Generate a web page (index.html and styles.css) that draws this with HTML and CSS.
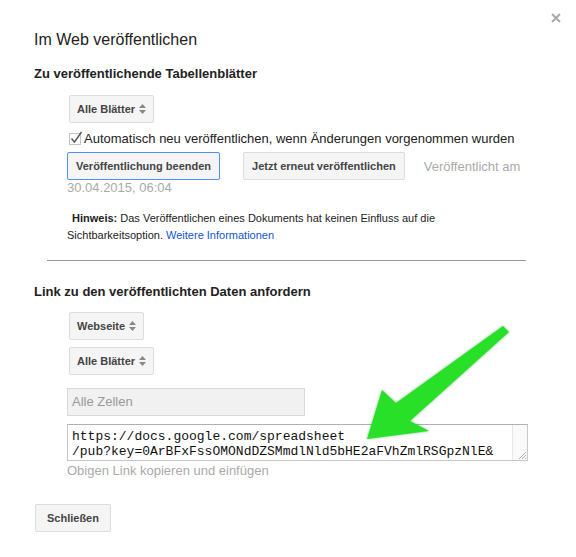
FILE: index.html
```html
<!DOCTYPE html>
<html lang="de">
<head>
  <meta charset="UTF-8" />
  <title>Im Web veröffentlichen</title>
  <link rel="stylesheet" href="styles.css">
</head>
<body>
  <div class="dialog">
    <button type="button" class="close" aria-label="Schließen">
      <svg width="12" height="12" viewBox="0 0 12 12"><path d="M2 2 L10 10 M10 2 L2 10" stroke="#aaa" stroke-width="2"/></svg>
    </button>

    <h1 class="title">Im Web veröffentlichen</h1>

    <h2 class="heading">Zu veröffentlichende Tabellenblätter</h2>
    <div class="section">
      <div class="select sheets-top">Alle Blätter
        <svg class="updown" width="7" height="10" viewBox="0 0 7 10"><path d="M0 4 L3.5 0 L7 4 Z M0 6 L3.5 10 L7 6 Z" fill="#888"/></svg>
      </div>

      <label class="check">
        <svg class="box" width="14" height="14" viewBox="0 0 14 14">
          <rect x="0.5" y="2.5" width="11" height="11" fill="#fff" stroke="#c4c4c4"/>
          <path d="M2.5 7.5 L5.5 11 L12.5 1" fill="none" stroke="#555" stroke-width="1.4"/>
        </svg>
        Automatisch neu veröffentlichen, wenn Änderungen vorgenommen wurden
      </label>

      <div class="publish-row">
        <button type="button" class="btn focused">Veröffentlichung beenden</button>
        <button type="button" class="btn">Jetzt erneut veröffentlichen</button>
        <span class="muted">Veröffentlicht am</span>
      </div>
      <div class="muted date">30.04.2015, 06:04</div>

      <p class="note"><b>Hinweis:</b> Das Veröffentlichen eines Dokuments hat keinen Einfluss auf die Sichtbarkeitsoption. <a href="#">Weitere Informationen</a></p>
    </div>

    <hr class="divider">

    <h2 class="heading link-heading">Link zu den veröffentlichten Daten anfordern</h2>
    <div class="section">
      <div class="select format">Webseite
        <svg class="updown" width="7" height="10" viewBox="0 0 7 10"><path d="M0 4 L3.5 0 L7 4 Z M0 6 L3.5 10 L7 6 Z" fill="#888"/></svg>
      </div>
      <div class="select sheets">Alle Blätter
        <svg class="updown" width="7" height="10" viewBox="0 0 7 10"><path d="M0 4 L3.5 0 L7 4 Z M0 6 L3.5 10 L7 6 Z" fill="#888"/></svg>
      </div>

      <div class="range">Alle Zellen</div>

      <div class="link-box">
        <div class="link-text">https://docs.google.com/spreadsheet
/pub?key=0ArBFxFssOMONdDZSMmdlNld5bHE2aFVhZmlRSGpzNlE&amp;</div>
        <div class="track">
          <svg class="grip" width="10" height="10" viewBox="0 0 10 10"><path d="M9 2 L2 9 M9 5 L5 9 M9 8 L8 9" stroke="#aaa" stroke-width="1"/></svg>
        </div>
      </div>
      <div class="muted hint">Obigen Link kopieren und einfügen</div>
    </div>

    <button type="button" class="btn close-btn">Schließen</button>
  </div>

  <svg class="arrow" width="576" height="557" viewBox="0 0 576 557">
    <polygon points="503,326 509,332 410,421 429,431 367,439 382,390 396,403" fill="#27e027"/>
  </svg>
</body>
</html>
```

FILE: styles.css
```css
body {
  margin: 0;
  position: relative;
  font-family: "Liberation Sans", Arial, sans-serif;
  color: #222;
  background: #fff;
}
.dialog {
  position: relative;
  padding: 30px 34px 0;
}
.close {
  position: absolute;
  top: 12px;
  right: 14px;
  padding: 0;
  border: none;
  background: none;
  line-height: 0;
}
.title {
  margin: 0;
  font-size: 16px;
  line-height: 20px;
  font-weight: normal;
}
.heading {
  margin: 16px 0 0;
  font-size: 13px;
  line-height: 16px;
  font-weight: bold;
}
.link-heading {
  margin-top: 23px;
}
.section {
  margin-left: 33px;
}
.select {
  display: flex;
  align-items: center;
  gap: 4px;
  width: max-content;
  height: 28px;
  box-sizing: border-box;
  margin-left: 2px;
  padding: 0 7px 0 7px;
  border: 1px solid #dcdcdc;
  border-radius: 2px;
  background: #f5f5f5;
  font-size: 11px;
  font-weight: bold;
  color: #444;
}
.sheets-top {
  margin-top: 13px;
}
.format {
  margin-top: 12px;
}
.sheets {
  margin-top: 7px;
}
.check {
  display: flex;
  align-items: center;
  gap: 1px;
  height: 18px;
  margin: 6px 0 0 2px;
  font-size: 13px;
}
.publish-row {
  display: flex;
  align-items: center;
  margin-top: 5px;
}
.btn {
  height: 28px;
  padding: 0 8px;
  border: 1px solid #dcdcdc;
  border-radius: 2px;
  background: #f5f5f5;
  font-family: "Liberation Sans", Arial, sans-serif;
  font-size: 11px;
  font-weight: bold;
  color: #444;
  margin-right: 23px;
}
.btn.focused {
  border-color: #4d90fe;
}
.muted {
  color: #aaa;
  font-size: 13px;
}
.publish-row .muted {
  margin-left: -4px;
}
.date {
  line-height: 16px;
}
.note {
  margin: 14px 0 0;
  width: 400px;
  font-size: 11px;
  line-height: 17px;
  text-indent: 5px;
}
.note a {
  color: #15c;
  text-decoration: none;
}
.divider {
  margin: 16px 0 0 13px;
  width: 479px;
  border: 0;
  border-top: 1px solid #999;
}
.range {
  margin-top: 13px;
  width: 238px;
  height: 28px;
  box-sizing: border-box;
  padding: 0 4px;
  border: 1px solid #d9d9d9;
  background: #f1f1f1;
  font-size: 13px;
  line-height: 26px;
  color: #999;
}
.link-box {
  display: flex;
  margin-top: 8px;
  width: 461px;
  height: 37px;
  box-sizing: border-box;
  border: 1px solid #c8c8c8;
  border-top-color: #b0b0b0;
  background: #fff;
}
.link-text {
  flex: 1;
  overflow: hidden;
  padding: 4px 0 0 4px;
  white-space: pre;
  font-family: "Liberation Mono", "Courier New", monospace;
  font-size: 13px;
  line-height: 15px;
  color: #111;
}
.track {
  display: flex;
  align-items: flex-end;
  justify-content: flex-end;
  width: 14px;
  border-left: 1px solid #e6e6e6;
  background: #fafafa;
}
.grip {
  display: block;
}
.hint {
  line-height: 16px;
  margin-top: 2px;
}
.close-btn {
  margin: 25px 0 0 1px;
  padding: 0 11px;
}
.arrow {
  position: absolute;
  top: 0;
  left: 0;
  pointer-events: none;
  filter: drop-shadow(0 0 1.5px rgba(0, 110, 0, 0.45));
}
```
